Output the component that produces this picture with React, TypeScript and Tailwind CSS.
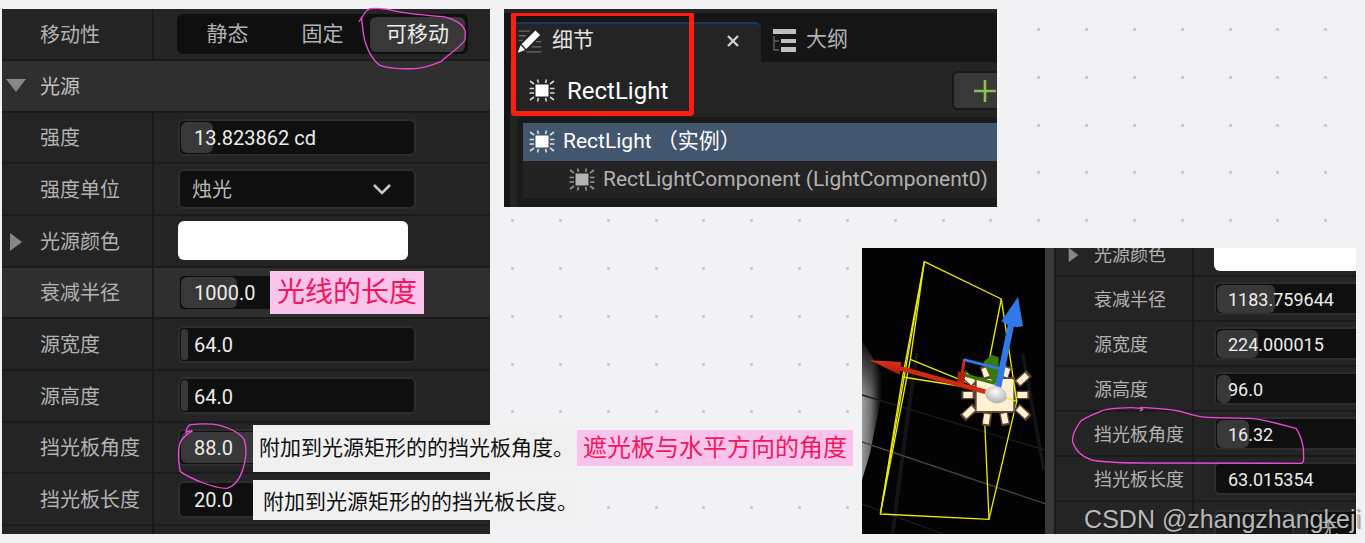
import { useState } from "react";
import type { ReactNode } from "react";
import clsx from "clsx";

type Row = {
  id: string;
  label: string;
  kind: "number" | "select" | "color";
  value?: string;
  // width of the slider fill behind the value, in px
  fill?: number;
  expandable?: boolean;
  hovered?: boolean;
};

const lightRows: Row[] = [
  { id: "intensity", label: "强度", kind: "number", value: "13.823862 cd", fill: 32 },
  { id: "units", label: "强度单位", kind: "select", value: "烛光" },
  { id: "color", label: "光源颜色", kind: "color", expandable: true },
  { id: "radius", label: "衰减半径", kind: "number", value: "1000.0", fill: 56, hovered: true },
  { id: "width", label: "源宽度", kind: "number", value: "64.0", fill: 7 },
  { id: "height", label: "源高度", kind: "number", value: "64.0", fill: 7 },
  { id: "angle", label: "挡光板角度", kind: "number", value: "88.0", fill: 228 },
  { id: "length", label: "挡光板长度", kind: "number", value: "20.0", fill: 0 },
];

const sampleRows: Row[] = [
  { id: "s-color", label: "光源颜色", kind: "color", expandable: true },
  { id: "s-radius", label: "衰减半径", kind: "number", value: "1183.759644", fill: 58 },
  { id: "s-width", label: "源宽度", kind: "number", value: "224.000015", fill: 41 },
  { id: "s-height", label: "源高度", kind: "number", value: "96.0", fill: 14 },
  { id: "s-angle", label: "挡光板角度", kind: "number", value: "16.32", fill: 32 },
  { id: "s-length", label: "挡光板长度", kind: "number", value: "63.015354", fill: 0 },
];

const mobilityOptions = ["静态", "固定", "可移动"];

const DotGrid = () => {
  const dots: ReactNode[] = [];
  for (let row = 0; row < 40; row++) {
    for (let col = 0; col < 80; col++) {
      dots.push(
        <rect
          key={`${row}-${col}`}
          x={Math.round(33 + col * 47.82)}
          y={Math.round(28 + row * 47.8)}
          width="3"
          height="3"
        />
      );
    }
  }
  return (
    <svg className="absolute inset-0 h-full w-full fill-[#cdcdcf]" aria-hidden="true">
      {dots}
    </svg>
  );
};

const LightIcon = () => (
  <svg viewBox="0 0 26 24" className="h-6 w-[26px] shrink-0" aria-hidden="true">
    <rect x="6.5" y="5.5" width="13" height="12" fill="currentColor" />
    <path
      d="M8.5 .5l1 3.5M17.5 .5l-1 3.5M8.5 22.5l1-3.5M17.5 22.5l-1-3.5M1 2l4 3M25 2l-4 3M1 21l4-3M25 21l-4-3M.5 9.5H5M.5 14H5M21 9.5h4.5M21 14h4.5"
      stroke="currentColor"
      strokeOpacity="0.8"
      strokeWidth="1.6"
      fill="none"
    />
  </svg>
);

const NumberField = ({ row, small }: { row: Row; small?: boolean }) => (
  <div
    className={clsx(
      "grid items-stretch overflow-hidden rounded-md border-2 border-[#2d2d2d] bg-[#0f0f0f]",
      small ? "h-[33px] w-[212px] shrink-0" : "h-[37px] w-[238px]"
    )}
  >
    <div
      className="col-start-1 row-start-1 my-px ml-px rounded-md bg-[#383838]"
      style={{ width: row.fill }}
    />
    <input
      id={row.id}
      type="text"
      defaultValue={row.value}
      className={clsx(
        "col-start-1 row-start-1 min-w-0 bg-transparent pt-0.5 text-[#ececec] outline-none",
        small ? "pl-3 text-lg" : "pl-3.5 text-xl"
      )}
    />
  </div>
);

const FieldFor = ({ row, small }: { row: Row; small?: boolean }) => {
  if (row.kind === "number") return <NumberField row={row} small={small} />;
  if (row.kind === "select") {
    return (
      <div className="grid h-10 w-[238px] items-center rounded-md border-2 border-[#2d2d2d] bg-[#0f0f0f]">
        <select
          id={row.id}
          className="col-start-1 row-start-1 h-full appearance-none bg-transparent pt-0.5 pl-3 text-xl text-[#b9b9b9] outline-none"
        >
          <option>{row.value}</option>
        </select>
        <svg
          viewBox="0 0 20 12"
          className="pointer-events-none col-start-1 row-start-1 mr-[22px] h-3 w-5 justify-self-end"
          aria-hidden="true"
        >
          <path d="M2 2l8 8 8-8" fill="none" stroke="#c8c8c8" strokeWidth="2.6" />
        </svg>
      </div>
    );
  }
  return (
    <input
      id={row.id}
      type="color"
      defaultValue="#ffffff"
      className={clsx(
        "appearance-none overflow-hidden rounded-md bg-white p-0 [&::-webkit-color-swatch-wrapper]:p-0 [&::-webkit-color-swatch]:border-0",
        small ? "h-[34px] w-[212px] shrink-0" : "h-[39px] w-[230px]"
      )}
    />
  );
};

const PropertyRow = ({ row, small }: { row: Row; small?: boolean }) => (
  <div
    className={clsx(
      "flex items-stretch border-b-2 border-[#1a1a1a]",
      small && "h-[45px] shrink-0",
      row.hovered ? "bg-[#2f2f2f]" : "bg-[#242424]"
    )}
  >
    <div
      className={clsx(
        "flex shrink-0 items-center border-r-2 border-[#1a1a1a] pt-0.5",
        small ? "w-[138px]" : "w-[152px]"
      )}
    >
      <span className={clsx("flex w-[38px] shrink-0 items-center", small ? "pl-3" : "pl-2")}>
        {row.expandable && (
          <svg viewBox="0 0 12 20" className={small ? "h-4 w-[11px]" : "h-5 w-3"} aria-hidden="true">
            <path d="M0 1v18L12 10z" fill="#868686" />
          </svg>
        )}
      </span>
      <label
        htmlFor={row.id}
        className={clsx("whitespace-nowrap text-[#b2b2b2]", small ? "text-lg" : "text-xl")}
      >
        {row.label}
      </label>
    </div>
    <div className={clsx("flex items-center", small ? "pl-5" : "pl-6")}>
      <FieldFor row={row} small={small} />
    </div>
  </div>
);

const LightDetails = () => {
  const [mobility, setMobility] = useState("可移动");

  return (
    <section className="relative z-10 grid h-[525px] w-[488px] shrink-0 grid-rows-[52px_repeat(9,minmax(0,1fr))_8px] bg-[#242424]">
      <div className="flex border-b-2 border-[#1a1a1a]">
        <div className="flex w-[152px] items-center border-r-2 border-[#1a1a1a] pt-0.5 pl-[38px] text-xl text-[#b2b2b2]">
          移动性
        </div>
        <div className="flex items-center pl-[23px]">
          <div className="flex h-10 items-center rounded-md bg-[#0f0f0f] px-[3px]">
            {mobilityOptions.map((option) => (
              <button
                key={option}
                type="button"
                aria-pressed={mobility === option}
                onClick={() => setMobility(option)}
                className={clsx(
                  "h-[35px] w-[95px] rounded-md pt-0.5 text-[21px]",
                  mobility === option ? "bg-[#383838] text-[#ececec]" : "text-[#b2b2b2]"
                )}
              >
                {option}
              </button>
            ))}
          </div>
        </div>
      </div>

      <div className="flex items-center gap-3 border-b-2 border-[#1a1a1a] bg-[#2f2f2f] pl-1">
        <svg viewBox="0 0 20 13" className="h-[13px] w-5" aria-hidden="true">
          <path d="M0 0h20L10 13z" fill="#868686" />
        </svg>
        <h2 className="pt-0.5 pl-0.5 text-xl text-[#c0c0c0]">光源</h2>
      </div>

      {lightRows.map((row) => (
        <PropertyRow key={row.id} row={row} />
      ))}

      <div className="flex">
        <div className="w-[152px] border-r-2 border-[#1a1a1a]" />
      </div>

      {/* notes pinned over the panel */}
      <p className="absolute top-[262px] left-[268px] bg-[#f8c4ec] px-[7px] text-[28px] leading-[43px] whitespace-nowrap text-[#f3165c]">
        光线的长度
      </p>
      <p className="absolute top-[416px] left-[251px] w-[325px] bg-[#f0f0f0] pl-1.5 text-[21px] leading-[47px] whitespace-nowrap text-[#111]">
        附加到光源矩形的的挡光板角度。
      </p>
      <p className="absolute top-[471px] left-[251px] w-[324px] bg-[#f0f0f0] pt-1 pl-2.5 text-[21px] leading-9 whitespace-nowrap text-[#111]">
        附加到光源矩形的的挡光板长度。
      </p>
      <p className="absolute top-[421px] left-[575px] bg-[#f8c4ec] px-1.5 text-2xl leading-9 whitespace-nowrap text-[#f3165c]">
        遮光板与水平方向的角度
      </p>

      <svg
        viewBox="6 27 1464 1575"
        className="pointer-events-none absolute inset-0 h-full w-full overflow-visible"
        fill="none"
        stroke="#ee48d6"
        strokeWidth="4"
        aria-hidden="true"
      >
        <path d="M1077 65L1089 48Q1098 30 1110 26Q1150 22 1190 34C1230 42 1280 46 1330 50C1375 62 1390 75 1396 95L1395 120C1385 138 1345 165 1322 185Q1280 203 1245 206Q1170 208 1140 196C1120 182 1098 150 1090 100L1084 50" />
        <path
          transform="translate(0 1020)"
          d="M578 275Q565 270 558 278Q560 258 572 254C600 251 640 252 660 256C700 268 725 285 733 300C742 330 738 360 728 390C718 420 700 440 680 445C640 445 570 415 541 395C533 360 534 320 542 305Q550 290 577 272"
        />
      </svg>
    </section>
  );
};

const ComponentTree = () => (
  <section className="relative flex h-[198px] w-[493px] flex-col overflow-hidden border-t-4 border-[#262626] bg-[#242424]">
    <div className="flex h-[49px] shrink-0 items-end bg-[#151515] pl-2.5">
      <div className="flex h-10 w-[247px] items-center rounded-tr-md border-t-2 border-[#143a63] bg-[#242424] pb-1 pl-[3px]">
        <svg viewBox="0 0 76 72" className="h-6 w-[25px]" aria-hidden="true">
          <path
            d="M5 6h34M5 20h22M5 34h12M58 38h16M44 54h30M28 69h46"
            stroke="#6a6a6a"
            strokeWidth="4"
          />
          <path d="M56 4L70 18L28 60L14 46ZM11 49L25 63L2 72Z" fill="#fff" />
        </svg>
        <h2 className="pl-2.5 text-[21px] text-[#e2e2e2]">细节</h2>
        <button type="button" aria-label="关闭" className="mr-[22px] ml-auto">
          <svg viewBox="0 0 12 12" className="h-3 w-3" aria-hidden="true">
            <path d="M1 1l10 10M11 1L1 11" stroke="#cfcfcf" strokeWidth="2.4" />
          </svg>
        </button>
      </div>
      <button
        type="button"
        className="flex h-10 items-center gap-2.5 pb-1 pl-3 text-[21px] text-[#b2b2b2]"
      >
        <svg viewBox="0 0 23 23" className="h-[23px] w-[23px]" aria-hidden="true">
          <path d="M0 0h23v5H0zM8 10h15v4H8zM8 18h15v5H8z" fill="#c0c0c0" />
          <path d="M1 7v14h5M1 12h5" fill="none" stroke="#5c5c5c" strokeWidth="1.5" />
        </svg>
        大纲
      </button>
    </div>

    <div className="flex min-h-0 flex-1 border-l-6 border-[#151515] pl-[7px]">
      <div className="flex min-w-0 flex-1 flex-col">
        <div className="flex h-[55px] shrink-0 items-center pt-0.5 pl-3 text-white">
          <LightIcon />
          <h3 className="pl-3 text-2xl">RectLight</h3>
          <button
            type="button"
            aria-label="添加"
            className="-mr-6 ml-auto flex h-[39px] w-[69px] items-center rounded-md border-2 border-[#191919] bg-[#383838] pl-5"
          >
            <svg viewBox="0 0 22 22" className="h-[22px] w-[22px]" aria-hidden="true">
              <path d="M11 0v22M0 11h22" stroke="#8bc34a" strokeWidth="2.6" />
            </svg>
          </button>
        </div>
        <ul className="flex-1 rounded-tl-md bg-[#1a1a1a] pt-1.5 pl-1.5">
          <li className="flex h-[38px] items-center gap-2 bg-[#42566e] pl-1.5 text-[21px] text-white">
            <LightIcon />
            <span className="whitespace-nowrap">RectLight （实例）</span>
          </li>
          <li className="flex h-[37px] items-center gap-2 bg-[#232323] pl-[46px] text-[21px] text-[#b2b2b2]">
            <LightIcon />
            <span className="whitespace-nowrap">RectLightComponent (LightComponent0)</span>
          </li>
        </ul>
      </div>
    </div>

    {/* highlight frame */}
    <div className="pointer-events-none absolute top-[-2px] left-[7px] h-[105px] w-[183px] rounded-sm border-[5px] border-[#ff1f10]" />
  </section>
);

const Viewport = () => (
  <svg
    viewBox="36 24 549 858"
    className="h-full w-[183px] shrink-0 bg-[#030304]"
    role="img"
    aria-label="矩形光源视口"
  >
    <defs>
      <linearGradient id="floor" x1="0" y1="0" x2="1" y2="0.15">
        <stop offset="0" stopColor="#a8a8a8" />
        <stop offset="0.5" stopColor="#6e6e6e" />
        <stop offset="0.85" stopColor="#1c1c1c" />
        <stop offset="1" stopColor="#030304" />
      </linearGradient>
      <linearGradient id="fade" x1="0" y1="0" x2="0" y2="1">
        <stop offset="0" stopColor="#030304" />
        <stop offset="0.45" stopColor="#030304" stopOpacity="0" />
      </linearGradient>
      <radialGradient id="ball" cx="0.45" cy="0.35" r="0.7">
        <stop offset="0" stopColor="#fff" />
        <stop offset="1" stopColor="#aaa" />
      </radialGradient>
      <linearGradient id="redCone" x1="0" y1="0" x2="0" y2="1">
        <stop offset="0" stopColor="#e0321a" />
        <stop offset="1" stopColor="#a51c08" />
      </linearGradient>
    </defs>
    <path d="M36 300L96 400Q102 430 94 470L60 640L36 720Z" fill="url(#floor)" />
    <path d="M36 290H120V720H36Z" fill="url(#fade)" />
    <g fill="none">
      <path d="M200 340C180 480 150 700 128 882" stroke="#141416" strokeWidth="12" />
      <path d="M518 340L582 690" stroke="#141416" strokeWidth="10" />
      <path d="M36 465L585 630M36 792L280 882" stroke="#1b1b1d" strokeWidth="4" />
      <path d="M36 606L585 791" stroke="#454547" strokeWidth="4" />
    </g>
    <g fill="none" stroke="#e9e90c" strokeWidth="4" strokeLinejoin="round">
      <path d="M223 65L454 177L500 484L417 838L91 822Z" />
      <path d="M223 65L158 410L91 822M223 65L181 358L91 822" />
      <path d="M454 177L400 450L417 838" />
      <path d="M181 358L440 464M158 411L330 438" />
    </g>
    <g stroke="#5d4636" strokeWidth="26">
      <path d="M402 378l12 38M473 378l-12 38M408 558l6-42M468 556l-8-42M334 465h44M494 465h44M338 400l36 32M537 400l-36 32M338 534l38-34M536 534l-36-34" />
    </g>
    <rect x="374" y="411" width="122" height="108" fill="#5d4636" />
    <g stroke="#fff0cf" strokeWidth="18">
      <path d="M403 384l8 26M472 384l-8 26M407 552l5-30M467 550l-6-30M340 465h28M502 465h30M344 405l26 24M531 405l-26 24M343 529l27-25M531 529l-27-25" />
    </g>
    <rect x="380" y="417" width="110" height="96" fill="#fff0cf" />
    <path d="M440 464L500 484L490 420" fill="none" stroke="#e9e90c" strokeWidth="4" />
    <path d="M400 366L424 344L446 352V436L424 420Z" fill="#37790b" />
    <path d="M436 430L340 404" stroke="#37790b" strokeWidth="10" />
    <path d="M332 430L343 358" stroke="#c9280f" strokeWidth="9" />
    <path d="M341 359L448 386" stroke="#2f79e8" strokeWidth="8" />
    <path d="M324 394l22 6-4 36-20-10z" fill="#b3200b" />
    <path d="M406 455L150 385" stroke="#d3290f" strokeWidth="14" />
    <path d="M60 361L154 366L149 404Z" fill="url(#redCone)" />
    <path d="M443 448L484 250" stroke="#2f79e8" strokeWidth="19" />
    <path d="M504 171L519 258Q488 268 454 244Z" fill="#2f79e8" />
    <ellipse cx="438" cy="464" rx="33" ry="25" transform="rotate(15 438 464)" fill="url(#ball)" />
  </svg>
);

const SamplePanel = () => (
  <section className="relative h-[286px] w-[494px] self-end">
    <div className="flex h-full overflow-hidden bg-[#1a1a1a]">
      <Viewport />
      <div className="w-[9px] shrink-0 bg-[#383838]" />
      <div className="ml-0.5 flex min-w-0 flex-1 flex-col overflow-hidden bg-[#242424]">
        <div className="-mt-4 flex flex-col">
          {sampleRows.map((row) => (
            <PropertyRow key={row.id} row={row} small />
          ))}
          <div className="flex h-[45px]">
            <div className="w-[138px] shrink-0 border-r-2 border-[#1a1a1a]" />
            <div className="flex items-start gap-3 pt-2 pl-5">
              <div className="h-10 w-20 rounded-md border-2 border-[#2d2d2d] bg-[#1a1a1a]" />
              <div className="h-10 w-[140px] shrink-0 rounded-md border-2 border-[#2d2d2d] bg-[#0f0f0f] pt-1 pl-3 text-lg text-[#b2b2b2]">
                无
              </div>
            </div>
          </div>
        </div>
      </div>
    </div>
    <svg
      viewBox="-534 24 1482 858"
      className="pointer-events-none absolute inset-0 h-full w-full"
      fill="none"
      stroke="#ee48d6"
      strokeWidth="4"
      aria-hidden="true"
    >
      <path d="M300 514L308 508Q300 503 272 503Q200 504 180 515C150 528 125 538 121 545C100 575 96 592 98 605C108 640 140 655 155 660Q200 668 300 669L785 670Q791 668 791 655L790 625C786 600 775 575 768 565C740 558 680 540 640 536C580 533 500 534 480 530C440 522 430 515 415 513C370 505 330 504 300 502" />
    </svg>
  </section>
);

const App = () => {
  return (
    <main className="relative flex min-h-screen items-start gap-3.5 overflow-hidden bg-[#f2f2f4] py-[9px] pr-[9px] pl-0.5 font-[Roboto,'Noto_Sans_CJK_SC',sans-serif]">
      <DotGrid />
      <LightDetails />
      <div className="relative flex min-w-0 flex-1 flex-col gap-[41px]">
        <ComponentTree />
        <SamplePanel />
      </div>
      <p className="absolute right-1 bottom-1 z-20 font-['Liberation_Sans',sans-serif] text-[25px] leading-10 whitespace-nowrap text-[#b9b9b9] [text-shadow:1px_1px_1px_#0006]">
        CSDN @zhangzhangkeji
      </p>
    </main>
  );
};

export default App;
